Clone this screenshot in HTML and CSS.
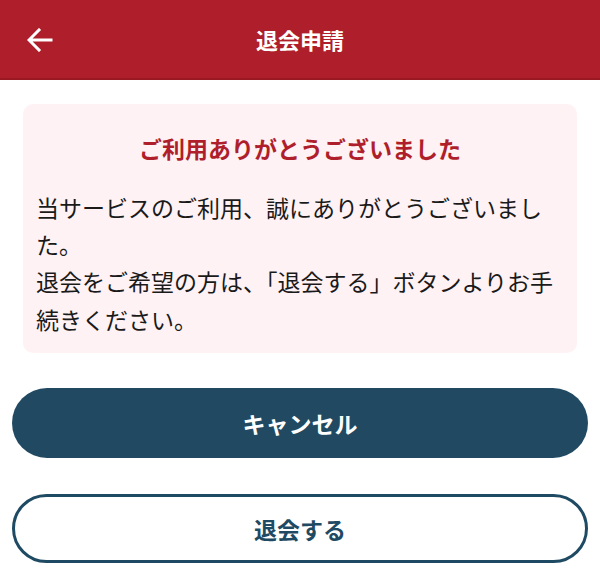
FILE: index.html
```html
<!DOCTYPE html>
<html lang="ja">
<head>
<meta charset="utf-8">
<link rel="stylesheet" href="styles.css">
</head>
<body>
<header class="header">
  <button class="back" aria-label="戻る">
    <svg width="26" height="24" viewBox="0 0 26 24"><path d="M24 12H3M12 2L2 12l10 10" fill="none" stroke="#fff" stroke-width="3" stroke-linecap="square"/></svg>
  </button>
  <h1 class="title">退会申請</h1>
</header>
<main class="main">
  <section class="card">
    <h2 class="card-title">ご利用ありがとうございました</h2>
    <p class="card-text">当サービスのご利用、誠にありがとうございました。<br>退会をご希望の方は、「退会する」ボタンよりお手続きください。</p>
  </section>
  <button class="btn btn-primary">キャンセル</button>
  <button class="btn btn-outline">退会する</button>
</main>
</body>
</html>
```
FILE: styles.css
```css
* { box-sizing: border-box; }
body {
  margin: 0;
  font-family: "Noto Sans CJK JP", "Noto Sans", sans-serif;
  background: #fff;
  color: #1a1a1a;
}
.header {
  position: relative;
  height: 80px;
  background: #ae1f2b;
  border-bottom: 2px solid #9a1822;
  display: flex;
  align-items: center;
  justify-content: center;
}
.back {
  position: absolute;
  left: 27px;
  top: 28px;
  padding: 0;
  border: 0;
  background: none;
  display: flex;
}
.title {
  margin: 0;
  color: #fff;
  font-size: 22px;
  font-weight: 700;
}
.main {
  padding: 24px 12px 0;
  display: flex;
  flex-direction: column;
}
.card {
  margin: 0 11px;
  background: #fff2f5;
  border-radius: 10px;
  padding: 27px 13px 15px;
}
.card-title {
  margin: 0 0 23px;
  text-align: center;
  color: #ae1f2b;
  font-size: 23px;
  font-weight: 700;
  line-height: 1.5;
}
.card-text {
  margin: 0;
  font-size: 23px;
  line-height: 37.4px;
}
.btn {
  font-family: inherit;
  font-size: 23px;
  font-weight: 700;
  border-radius: 999px;
  width: 100%;
  cursor: pointer;
}
.btn-primary {
  margin-top: 35px;
  height: 70px;
  background: #214a62;
  color: #fff;
  border: 0;
}
.btn-outline {
  margin-top: 36px;
  height: 69px;
  background: #fff;
  color: #1f4a63;
  border: 3px solid #1f4a63;
}
```
